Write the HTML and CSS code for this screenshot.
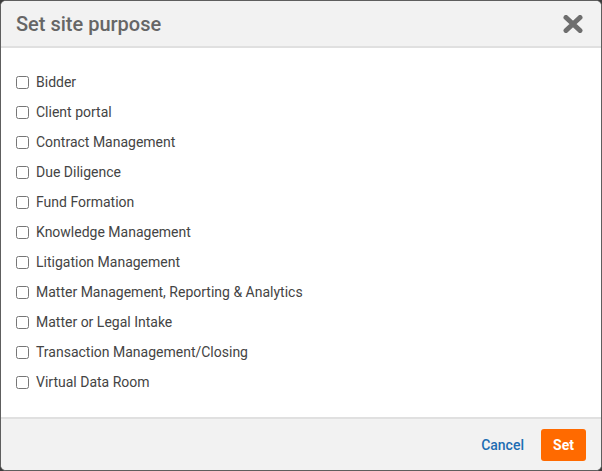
FILE: index.html
```html
<!DOCTYPE html>
<html lang="en">
<head>
<meta charset="utf-8">
<title>Set site purpose</title>
<link rel="stylesheet" href="styles.css">
</head>
<body>
<div class="dialog">
  <header class="dialog-header">
    <h1 class="dialog-title">Set site purpose</h1>
    <button class="close-btn" aria-label="Close">
      <svg width="20" height="18" viewBox="0 0 20 18"><path d="M3 2.5 L17 15.5 M17 2.5 L3 15.5" stroke="#6e6e6e" stroke-width="5" stroke-linecap="round"/></svg>
    </button>
  </header>
  <ul class="purpose-list">
    <li><label class="purpose"><input type="checkbox"><span>Bidder</span></label></li>
    <li><label class="purpose"><input type="checkbox"><span>Client portal</span></label></li>
    <li><label class="purpose"><input type="checkbox"><span>Contract Management</span></label></li>
    <li><label class="purpose"><input type="checkbox"><span>Due Diligence</span></label></li>
    <li><label class="purpose"><input type="checkbox"><span>Fund Formation</span></label></li>
    <li><label class="purpose"><input type="checkbox"><span>Knowledge Management</span></label></li>
    <li><label class="purpose"><input type="checkbox"><span>Litigation Management</span></label></li>
    <li><label class="purpose"><input type="checkbox"><span>Matter Management, Reporting &amp; Analytics</span></label></li>
    <li><label class="purpose"><input type="checkbox"><span>Matter or Legal Intake</span></label></li>
    <li><label class="purpose"><input type="checkbox"><span>Transaction Management/Closing</span></label></li>
    <li><label class="purpose"><input type="checkbox"><span>Virtual Data Room</span></label></li>
  </ul>
  <footer class="dialog-footer">
    <a class="cancel-link" href="#">Cancel</a>
    <button class="set-btn">Set</button>
  </footer>
</div>
</body>
</html>
```

FILE: styles.css
```css
html, body {
  margin: 0;
  padding: 0;
  background: #3c3c3c;
}

.dialog {
  box-sizing: border-box;
  width: 602px;
  height: 471px;
  display: flex;
  flex-direction: column;
  background: #fff;
  border: 1px solid #5e5e5e;
  border-radius: 6px;
  overflow: hidden;
  font-family: Roboto, "Liberation Sans", sans-serif;
}

.dialog-header {
  height: 45px;
  flex: none;
  display: flex;
  align-items: center;
  justify-content: space-between;
  padding: 0 18px 0 15px;
  background: #f2f2f2;
  border-bottom: 2px solid #e0e0e0;
}

.dialog-title {
  margin: 0;
  font-size: 20px;
  font-weight: 500;
  color: #666;
}

.close-btn {
  border: 0;
  background: none;
  padding: 0;
  width: 20px;
  height: 18px;
  display: flex;
}

.purpose-list {
  list-style: none;
  margin: 0;
  padding: 19px 15px 20px;
  flex: 1;
}

.purpose-list li {
  height: 30px;
  display: flex;
  align-items: center;
}

.purpose {
  display: flex;
  align-items: center;
  gap: 7px;
  font-size: 14px;
  color: #444;
}

.purpose input {
  margin: 0;
  width: 13px;
  height: 13px;
}

.dialog-footer {
  box-sizing: border-box;
  height: 53px;
  flex: none;
  display: flex;
  align-items: center;
  justify-content: flex-end;
  gap: 17px;
  padding: 1px 15px 1px 0;
  background: #f2f2f2;
  border-top: 2px solid #e0e0e0;
}

.cancel-link {
  font-size: 14px;
  font-weight: 500;
  color: #1d6db2;
  text-decoration: none;
}

.set-btn {
  width: 45px;
  height: 32px;
  border: 0;
  border-radius: 3px;
  background: #ff6a00;
  color: #fff;
  font-family: inherit;
  font-size: 14px;
  font-weight: 700;
}
```
